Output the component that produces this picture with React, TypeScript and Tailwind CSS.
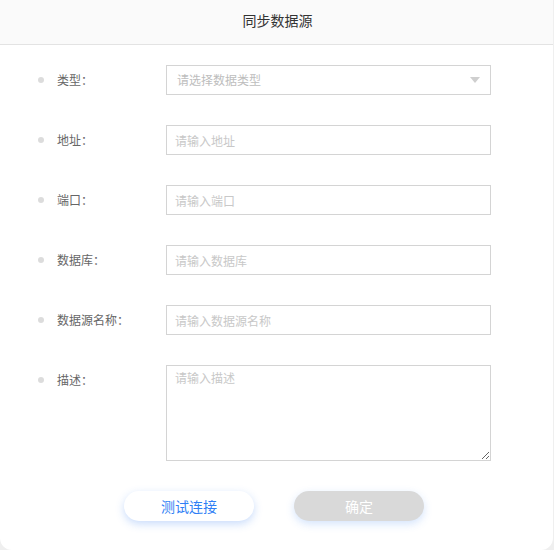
import React from 'react';

const font = { fontFamily: '"Noto Sans CJK SC", "Noto Sans", sans-serif' };

function Row({ label, children, top = false }: { label: string; children: React.ReactNode; top?: boolean }) {
  return (
    <div className={`flex ${top ? 'items-start' : 'items-center'}`}>
      <div className="flex h-[30px] w-[128px] items-center">
        <span className="h-[6px] w-[6px] rounded-full bg-[#dcdcdc]" />
        <span className="ml-[13px] text-[12px] text-[#666]">{label}</span>
      </div>
      {children}
    </div>
  );
}

function TextInput({ placeholder }: { placeholder: string }) {
  return (
    <input
      placeholder={placeholder}
      className="h-[30px] w-[325px] border border-[#d4d4d4] bg-white px-[8px] text-[12px] text-[#333] outline-none placeholder:text-[#c8c8c8]"
    />
  );
}

export default function App() {
  return (
    <div className="h-[550px] w-[554px] bg-[#efefef]" style={font}>
      <div className="flex h-[550px] w-[553px] flex-col overflow-hidden rounded-b-[12px] bg-white">
        <div className="flex h-[45px] items-center justify-center border-b border-[#e3e3e3] bg-[#fafafa] pb-[3px] pl-[2px] text-[14px] text-[#333]">
          同步数据源
        </div>

        <div className="flex flex-col gap-[30px] pl-[38px] pt-[20px]">
          <Row label="类型：">
            <div className="relative flex h-[30px] w-[325px] items-center border border-[#d4d4d4] bg-white pl-[10px] text-[12px] text-[#bdbdbd]">
              请选择数据类型
              <svg className="absolute right-[10px] top-[11px]" width="10" height="6" viewBox="0 0 10 6">
                <path d="M0 0 L10 0 L5 6 Z" fill="#cfcfcf" />
              </svg>
            </div>
          </Row>
          <Row label="地址：">
            <TextInput placeholder="请输入地址" />
          </Row>
          <Row label="端口：">
            <TextInput placeholder="请输入端口" />
          </Row>
          <Row label="数据库：">
            <TextInput placeholder="请输入数据库" />
          </Row>
          <Row label="数据源名称：">
            <TextInput placeholder="请输入数据源名称" />
          </Row>
          <Row label="描述：" top>
            <textarea
              placeholder="请输入描述"
              className="h-[96px] w-[325px] border border-[#d4d4d4] bg-white px-[8px] py-[3px] text-[12px] text-[#333] outline-none placeholder:text-[#c8c8c8]"
            />
          </Row>
        </div>

        <div className="mt-[30px] flex justify-center gap-[40px] pr-[5px]">
          <button className="h-[30px] w-[130px] rounded-full bg-white text-[14px] text-[#2f7ff5] shadow-[0_3px_8px_rgba(60,130,240,0.28)]">
            测试连接
          </button>
          <button className="h-[30px] w-[130px] rounded-full bg-[#d9d9d9] text-[14px] text-white shadow-[0_3px_8px_rgba(60,130,240,0.22)]">
            确定
          </button>
        </div>
      </div>
    </div>
  );
}
